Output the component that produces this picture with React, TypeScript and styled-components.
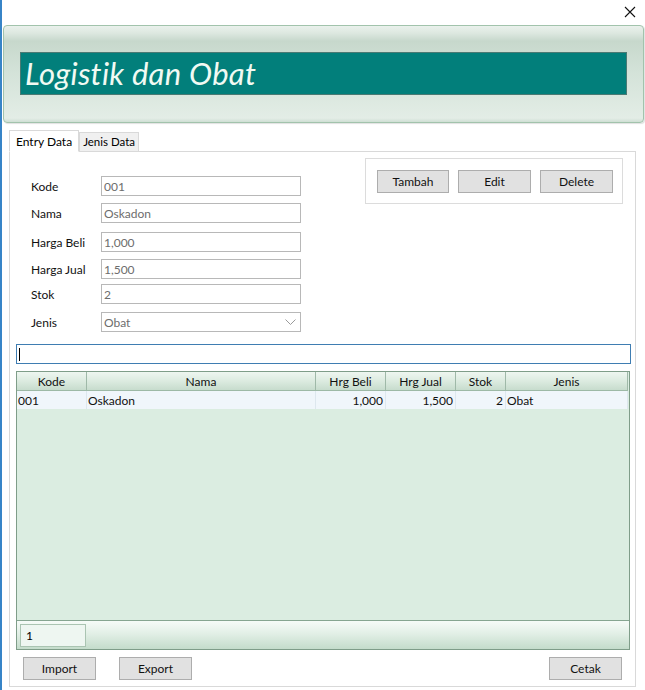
import React from "react";
import styled, { createGlobalStyle } from "styled-components";

const Global = createGlobalStyle`
  html, body { margin: 0; padding: 0; background: #ffffff; }
  body { font-family: Lato, "Liberation Sans", sans-serif; font-size: 12px; color: #000; }
  * { box-sizing: border-box; }
`;

const Window = styled.div`
  width: 645px;
  height: 690px;
  background: #ffffff;
  border-left: 2px solid #3784c7;
  display: flex;
  flex-direction: column;
  overflow: hidden;
`;

const TitleBar = styled.div`
  height: 25px;
  display: flex;
  justify-content: flex-end;
  align-items: flex-start;
  padding: 6px 9px 0 0;
`;

const HeaderPanel = styled.div`
  margin: 0 1px 0 1px;
  height: 98px;
  border: 1px solid #a2c3ac;
  border-radius: 4px;
  background: linear-gradient(
    to bottom,
    #eaf1ec 0px,
    #dde8e0 7px,
    #c7d8cc 15px,
    #d3e2d8 45px,
    #e3ede6 96%,
    #cfdfd4 100%
  );
  box-shadow: 1px 1px 1px rgba(0, 0, 0, 0.12);
  padding: 26px 16px 0 16px;
`;

const Banner = styled.div`
  height: 43px;
  background: #027f7b;
  border: 1px solid #4a7a74;
  display: flex;
  align-items: center;
  padding-left: 4px;
`;

const Title = styled.h1`
  margin: 0;
  font-family: Lato, "DejaVu Sans", sans-serif;
  font-style: italic;
  font-weight: 400;
  font-size: 31px;
  letter-spacing: 0.3px;
  color: #f1faf3;
  line-height: 1;
`;

const TabStrip = styled.div`
  display: flex;
  align-items: flex-end;
  margin: 6px 0 0 7px;
  height: 22px;
`;

const Tab = styled.div<{ $active?: boolean }>`
  height: ${(p) => (p.$active ? "22px" : "19px")};
  padding: ${(p) => (p.$active ? "3px 6px 0 6px" : "2px 3px 0 3px")};
  border: 1px solid #d9d9d9;
  border-bottom: ${(p) => (p.$active ? "1px solid #ffffff" : "none")};
  background: ${(p) => (p.$active ? "#ffffff" : "#f0f0f0")};
  margin-bottom: ${(p) => (p.$active ? "-1px" : "0")};
  position: relative;
  z-index: ${(p) => (p.$active ? 1 : 0)};
  font-size: ${(p) => (p.$active ? "12px" : "11.5px")};
  white-space: nowrap;
`;

const TabPanel = styled.div`
  margin: 0 8px 0 7px;
  width: 627px;
  height: 536px;
  border: 1px solid #d9d9d9;
  display: flex;
  flex-direction: column;
`;

const TopSection = styled.div`
  display: flex;
  justify-content: space-between;
  align-items: flex-start;
  padding: 6px 12px 0 21px;
`;

const Form = styled.div`
  display: flex;
  flex-direction: column;
  padding-top: 18px;
`;

const Row = styled.div<{ $mt: number }>`
  display: grid;
  grid-template-columns: 70px 200px;
  align-items: center;
  margin-top: ${(p) => p.$mt}px;
`;

const Label = styled.span`
  font-size: 12px;
  color: #111;
`;

const Field = styled.div`
  height: 20px;
  border: 1px solid #b8b8b8;
  background: #ffffff;
  color: #6d6d6d;
  font-size: 12px;
  padding-left: 2px;
  display: flex;
  align-items: center;
  justify-content: space-between;
  padding-right: 4px;
`;

const GroupBox = styled.div`
  width: 258px;
  height: 46px;
  border: 1px solid #dcdcdc;
  display: flex;
  align-items: center;
  gap: 9px;
  padding: 0 0 0 11px;
`;

const Button = styled.div<{ $w?: number }>`
  width: ${(p) => p.$w ?? 73}px;
  height: 23px;
  background: #e1e1e1;
  border: 1px solid #adadad;
  display: flex;
  align-items: center;
  justify-content: center;
  font-size: 12px;
  color: #111;
`;

const Search = styled.div`
  margin: 12px 4px 0 6px;
  height: 20px;
  border: 1px solid #3f7db2;
  display: flex;
  align-items: center;
  padding-left: 2px;
`;

const Caret = styled.span`
  width: 1px;
  height: 13px;
  background: #000;
`;

const Grid = styled.div`
  margin: 7px 5px 0 6px;
  height: 279px;
  border: 1px solid #7f9d89;
  background: #dbede1;
  display: flex;
  flex-direction: column;
`;

const HeaderRow = styled.div`
  display: grid;
  grid-template-columns: 70px 229px 70px 70px 50px 1fr;
  height: 19px;
  background: linear-gradient(to bottom, #eef6f0 0%, #dcebe0 50%, #c7dccd 100%);
  border-bottom: 1px solid #9db9a6;
  margin-right: 1px;
`;

const HeadCell = styled.div`
  display: flex;
  align-items: center;
  justify-content: center;
  border-right: 1px solid #9fb9a8;
  font-size: 12px;
  color: #111;
`;

const DataRow = styled.div`
  display: grid;
  grid-template-columns: 70px 229px 70px 70px 50px 1fr;
  height: 18px;
  background: #f0f6fb;
  margin-right: 1px;
`;

const Cell = styled.div<{ $right?: boolean }>`
  display: flex;
  align-items: center;
  justify-content: ${(p) => (p.$right ? "flex-end" : "flex-start")};
  padding: 0 2px 0 1px;
  border-right: 1px solid #dde7ee;
  font-size: 12px;
  color: #111;
`;

const GridBody = styled.div`
  flex: 1;
`;

const GridFooter = styled.div`
  height: 29px;
  border-top: 1px solid #86a591;
  background: linear-gradient(to bottom, #f6fbf8 0%, #e2efe6 45%, #c4dccb 100%);
  display: flex;
  align-items: center;
  padding-left: 3px;
`;

const PageBox = styled.div`
  width: 66px;
  height: 23px;
  background: #eef6f1;
  border: 1px solid #aac4b2;
  font-size: 12px;
  display: flex;
  align-items: center;
  padding-left: 5px;
`;

const BottomBar = styled.div`
  display: flex;
  align-items: center;
  margin: 7px 13px 0 13px;
  gap: 23px;
`;

const Spacer = styled.div`
  flex: 1;
`;

const Close = () => (
  <svg width="12" height="12" viewBox="0 0 12 12">
    <path d="M1 1 L11 11 M11 1 L1 11" stroke="#111" strokeWidth="1.1" fill="none" />
  </svg>
);

const Chevron = () => (
  <svg width="11" height="6" viewBox="0 0 11 6">
    <path d="M0.5 0.5 L5.5 5.5 L10.5 0.5" stroke="#9a9a9a" strokeWidth="1" fill="none" />
  </svg>
);

const fields = [
  { label: "Kode", value: "001", mt: 0 },
  { label: "Nama", value: "Oskadon", mt: 7 },
  { label: "Harga Beli", value: "1,000", mt: 9 },
  { label: "Harga Jual", value: "1,500", mt: 7 },
  { label: "Stok", value: "2", mt: 5 },
];

export default function App() {
  return (
    <>
      <Global />
      <Window>
        <TitleBar>
          <Close />
        </TitleBar>
        <HeaderPanel>
          <Banner>
            <Title>Logistik dan Obat</Title>
          </Banner>
        </HeaderPanel>
        <TabStrip>
          <Tab $active>Entry Data</Tab>
          <Tab>Jenis Data</Tab>
        </TabStrip>
        <TabPanel>
          <TopSection>
            <Form>
              {fields.map((f) => (
                <Row key={f.label} $mt={f.mt}>
                  <Label>{f.label}</Label>
                  <Field>{f.value}</Field>
                </Row>
              ))}
              <Row $mt={8}>
                <Label>Jenis</Label>
                <Field>
                  Obat
                  <Chevron />
                </Field>
              </Row>
            </Form>
            <GroupBox>
              <Button $w={72}>Tambah</Button>
              <Button>Edit</Button>
              <Button>Delete</Button>
            </GroupBox>
          </TopSection>
          <Search>
            <Caret />
          </Search>
          <Grid>
            <HeaderRow>
              <HeadCell>Kode</HeadCell>
              <HeadCell>Nama</HeadCell>
              <HeadCell>Hrg Beli</HeadCell>
              <HeadCell>Hrg Jual</HeadCell>
              <HeadCell>Stok</HeadCell>
              <HeadCell>Jenis</HeadCell>
            </HeaderRow>
            <DataRow>
              <Cell>001</Cell>
              <Cell>Oskadon</Cell>
              <Cell $right>1,000</Cell>
              <Cell $right>1,500</Cell>
              <Cell $right>2</Cell>
              <Cell>Obat</Cell>
            </DataRow>
            <GridBody />
            <GridFooter>
              <PageBox>1</PageBox>
            </GridFooter>
          </Grid>
          <BottomBar>
            <Button>Import</Button>
            <Button>Export</Button>
            <Spacer />
            <Button>Cetak</Button>
          </BottomBar>
        </TabPanel>
      </Window>
    </>
  );
}
